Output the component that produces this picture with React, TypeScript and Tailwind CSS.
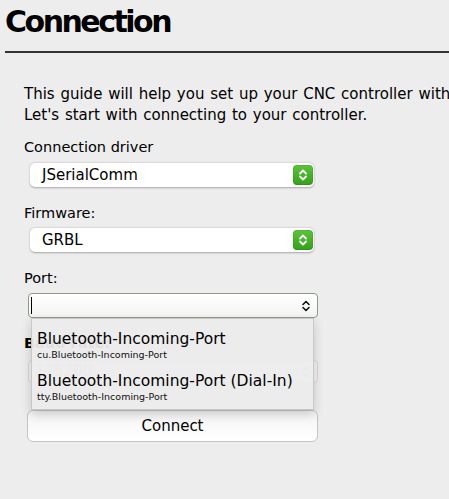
import React from "react"

function Stepper({ green }: { green?: boolean }) {
  if (green) {
    return (
      <span className="flex h-[20px] w-[20px] items-center justify-center rounded-[4px] bg-gradient-to-b from-[#5cc43a] to-[#35a01c] shadow-[inset_0_0_0_1px_rgba(0,0,0,0.08)]">
        <svg width="10" height="14" viewBox="0 0 10 14" fill="none" stroke="white" strokeWidth="1.8" strokeLinecap="round" strokeLinejoin="round">
          <path d="M2 5.5 L5 2.5 L8 5.5" />
          <path d="M2 8.5 L5 11.5 L8 8.5" />
        </svg>
      </span>
    )
  }
  return (
    <svg width="10" height="14" viewBox="0 0 10 14" fill="none" stroke="#111" strokeWidth="1.6" strokeLinecap="round" strokeLinejoin="round">
      <path d="M2 5.5 L5 2.5 L8 5.5" />
      <path d="M2 8.5 L5 11.5 L8 8.5" />
    </svg>
  )
}

function Select({ value }: { value: string }) {
  return (
    <div className="ml-[6px] flex h-[24px] w-[284px] items-center justify-between rounded-[5px] bg-white pl-[12px] pr-[1px] shadow-[0_0.5px_2px_rgba(0,0,0,0.3)]">
      <span className="text-[15px] text-black">{value}</span>
      <Stepper green />
    </div>
  )
}

export default function App() {
  return (
    <div className="min-h-screen overflow-hidden bg-[#ededed] font-['DejaVu_Sans',sans-serif] text-black">
      <h1 className="pl-[5px] pt-[2px] text-[30px] font-bold leading-[40px] tracking-[-2.5px]">Connection</h1>
      <div className="ml-[5px] mt-[9px] h-[2px] bg-[#333]" />

      <div className="pl-[24px] pt-[31px]">
        <p className="whitespace-nowrap text-[15px] leading-[21px] [word-spacing:1px]">
          This guide will help you set up your CNC controller with UGS.
          <br />
          Let's start with connecting to your controller.
        </p>

        <div className="mt-[11px] text-[14.5px] leading-[21px]">Connection driver</div>
        <div className="mt-[5px]">
          <Select value="JSerialComm" />
        </div>

        <div className="mt-[16px] text-[14.5px] leading-[21px]">Firmware:</div>
        <div className="mt-[4px]">
          <Select value="GRBL" />
        </div>

        <div className="mt-[16px] text-[14.5px] leading-[21px]">Port:</div>
        <div className="relative mt-[4px]">
          <div className="ml-[4px] flex h-[25px] w-[290px] items-center justify-between rounded-[4px] border border-[#8d9b85] bg-gradient-to-b from-white to-[#f4f4f4] pl-[2px] pr-[6px]">
            <span className="h-[17px] w-[1px] bg-black" />
            <Stepper />
          </div>

          <div className="absolute left-[7px] top-[25px] z-10 w-[283px] border border-[#c9c9c9] bg-[#ececec]/95 pb-[6px] pl-[5px] pt-[10px] shadow-[0_4px_10px_rgba(0,0,0,0.18)]">
            <div className="text-[15.5px] leading-[20px]">Bluetooth-Incoming-Port</div>
            <div className="text-[9.5px] leading-[12px] text-[#111]">cu.Bluetooth-Incoming-Port</div>
            <div className="mt-[10px] text-[15.5px] leading-[20px]">Bluetooth-Incoming-Port (Dial-In)</div>
            <div className="text-[9.5px] leading-[12px] text-[#111]">tty.Bluetooth-Incoming-Port</div>
          </div>
        </div>

        <div className="mt-[15px] text-[14.5px] font-bold leading-[21px]">Baud rate:</div>
        <div className="mt-[6px] ml-[4px] flex h-[23px] w-[290px] items-center justify-between rounded-[4px] border border-[#d8d8d8] bg-[#f3f3f3] pl-[6px] pr-[6px]">
          <span className="text-[15px] text-[#bdbdbd]">115200</span>
          <svg width="10" height="14" viewBox="0 0 10 14" fill="none" stroke="#c8c8c8" strokeWidth="1.6" strokeLinecap="round" strokeLinejoin="round">
            <path d="M2 5.5 L5 2.5 L8 5.5" />
            <path d="M2 8.5 L5 11.5 L8 8.5" />
          </svg>
        </div>

        <button className="ml-[3px] mt-[27px] flex h-[32px] w-[291px] items-center justify-center rounded-[6px] border border-[#c4c4c4] bg-gradient-to-b from-[#f4f4f4] to-white text-[15px] text-black">
          Connect
        </button>
      </div>
    </div>
  )
}
